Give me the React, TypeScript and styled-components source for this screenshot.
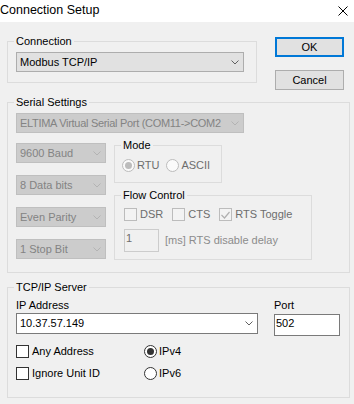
import React from 'react';
import styled, { createGlobalStyle } from 'styled-components';

const GlobalStyle = createGlobalStyle`
  html, body {
    margin: 0;
    padding: 0;
    background: #f0f0f0;
  }
  * {
    box-sizing: border-box;
  }
`;

const win_font = '"Liberation Sans", Arial, sans-serif';

const Window = styled.div`
  width: 354px;
  height: 404px;
  overflow: hidden;
  background: #f0f0f0;
  color: #000;
  font-family: ${win_font};
  font-size: 11px;
  line-height: 13px;
`;

const TitleBar = styled.div`
  height: 22px;
  background: #fff;
  display: flex;
  align-items: flex-start;
  justify-content: space-between;
  padding: 2px 6px 0 0;
`;

const Title = styled.span`
  font-size: 12.5px;
  line-height: 16px;
`;

const CloseIcon = styled.svg`
  margin-top: 4px;
`;

const Body = styled.div`
  display: flex;
  flex-direction: column;
  padding: 13px 4px 0 7px;
`;

const TopRow = styled.div`
  display: flex;
  align-items: flex-start;
`;

const Group = styled.fieldset<{ $w?: number; $pad: string; $mt?: number }>`
  margin: ${p => p.$mt ?? 0}px 0 0 0;
  min-width: 0;
  width: ${p => (p.$w ? `${p.$w}px` : 'auto')};
  border: 1px solid #dcdcdc;
  padding: ${p => p.$pad};
`;

const Legend = styled.legend<{ $x?: number }>`
  padding: 0 2px;
  margin-left: ${p => p.$x ?? -2}px;
  font-size: 11px;
  line-height: 13px;
`;

const ButtonColumn = styled.div`
  display: flex;
  flex-direction: column;
  gap: 13px;
  margin-left: 18px;
  padding-top: 2px;
`;

const DialogButton = styled.button<{ $default?: boolean }>`
  width: 69px;
  height: 20px;
  padding: 0;
  font-family: ${win_font};
  font-size: 11px;
  line-height: 13px;
  color: #000;
  background: #e1e1e1;
  border: ${p => (p.$default ? '2px solid #0078d7' : '1px solid #adadad')};
`;

type ComboKind = 'normal' | 'disabled' | 'white';

const comboBg = { normal: '#e1e1e1', disabled: '#cccccc', white: '#ffffff' };
const comboBorder = { normal: '#adadad', disabled: '#bfbfbf', white: '#7a7a7a' };
const comboText = { normal: '#000000', disabled: '#838383', white: '#000000' };
const chevronColor = { normal: '#606060', disabled: '#b3b3b3', white: '#606060' };

const ComboBox = styled.div<{ $w: number; $h?: number; $kind: ComboKind }>`
  display: flex;
  align-items: center;
  width: ${p => p.$w}px;
  height: ${p => p.$h ?? 20}px;
  padding: 0 4px 0 3px;
  border: 1px solid ${p => comboBorder[p.$kind]};
  background: ${p => comboBg[p.$kind]};
  color: ${p => comboText[p.$kind]};
`;

const ComboText = styled.span<{ $squeeze?: boolean }>`
  flex: 1;
  overflow: hidden;
  white-space: nowrap;
  margin-right: 6px;
  letter-spacing: ${p => (p.$squeeze ? '-0.3px' : 'normal')};
`;

const SerialRow = styled.div`
  display: flex;
  align-items: flex-start;
  gap: 8px;
  margin-top: 6px;
`;

const ComboColumn = styled.div`
  display: flex;
  flex-direction: column;
  gap: 12px;
  padding-top: 4px;
`;

const SideColumn = styled.div`
  display: flex;
  flex-direction: column;
  gap: 6px;
`;

const OptionRow = styled.div<{ $gap: number }>`
  display: flex;
  align-items: center;
  gap: ${p => p.$gap}px;
  height: 13px;
`;

const Option = styled.label<{ $gap?: number; $dim?: boolean }>`
  display: flex;
  align-items: center;
  gap: ${p => p.$gap ?? 3}px;
  height: 13px;
  color: ${p => (p.$dim ? '#6d6d6d' : '#000')};
  white-space: nowrap;
`;

const CheckBox = styled.span<{ $dim?: boolean }>`
  display: inline-flex;
  align-items: center;
  justify-content: center;
  width: 13px;
  height: 13px;
  border: 1px solid ${p => (p.$dim ? '#bcbcbc' : '#333333')};
  background: ${p => (p.$dim ? '#f3f3f3' : '#ffffff')};
`;

const RadioCircle = styled.span<{ $dim?: boolean }>`
  display: inline-flex;
  align-items: center;
  justify-content: center;
  width: 13px;
  height: 13px;
  border-radius: 50%;
  border: 1px solid ${p => (p.$dim ? '#bcbcbc' : '#333333')};
  background: ${p => (p.$dim ? '#fafafa' : '#ffffff')};
`;

const RadioDot = styled.span<{ $dim?: boolean }>`
  width: 7px;
  height: 7px;
  border-radius: 50%;
  background: ${p => (p.$dim ? '#bcbcbc' : '#333333')};
`;

const DelayRow = styled.div`
  display: flex;
  align-items: center;
  margin-top: 8px;
`;

const EditBox = styled.div<{ $w: number; $h: number; $dim?: boolean; $mt?: number }>`
  width: ${p => p.$w}px;
  height: ${p => p.$h}px;
  margin-top: ${p => p.$mt ?? 0}px;
  padding: 2px 2px 0 1px;
  border: 1px solid ${p => (p.$dim ? '#cccccc' : '#7a7a7a')};
  background: ${p => (p.$dim ? '#f0f0f0' : '#ffffff')};
  color: ${p => (p.$dim ? '#6d6d6d' : '#000')};
`;

const DimText = styled.span`
  margin-left: 6px;
  color: #8c8c8c;
  white-space: nowrap;
`;

const AddressRow = styled.div`
  display: flex;
  align-items: flex-start;
  height: 35px;
`;

const Field = styled.div<{ $ml?: number }>`
  display: flex;
  flex-direction: column;
  margin-left: ${p => p.$ml ?? 0}px;
`;

const FieldLabel = styled.div`
  margin-bottom: 1px;
`;

const OptionGrid = styled.div`
  display: grid;
  grid-template-columns: 128px auto;
  grid-auto-rows: 13px;
  row-gap: 9px;
  margin-top: 11px;
`;

const Chevron: React.FC<{ color: string }> = ({ color }) => (
  <svg width="8" height="5" viewBox="0 0 8 5">
    <polyline points="0.5,0.5 4,4 7.5,0.5" fill="none" stroke={color} strokeWidth="1" />
  </svg>
);

const Combo: React.FC<{ w: number; h?: number; kind: ComboKind; text: string; squeeze?: boolean }> = ({ w, h, kind, text, squeeze }) => (
  <ComboBox $w={w} $h={h} $kind={kind}>
    <ComboText $squeeze={squeeze}>{text}</ComboText>
    <Chevron color={chevronColor[kind]} />
  </ComboBox>
);

const Check: React.FC<{ label: string; dim?: boolean; checked?: boolean }> = ({ label, dim, checked }) => (
  <Option $dim={dim}>
    <CheckBox $dim={dim}>
      {checked && (
        <svg width="9" height="8" viewBox="0 0 9 8">
          <polyline points="0.5,4 3.5,7 8.5,1" fill="none" stroke={dim ? '#b0b0b0' : '#333'} strokeWidth="1.2" />
        </svg>
      )}
    </CheckBox>
    {label}
  </Option>
);

const Radio: React.FC<{ label: string; dim?: boolean; selected?: boolean; gap?: number }> = ({ label, dim, selected, gap }) => (
  <Option $dim={dim} $gap={gap}>
    <RadioCircle $dim={dim}>{selected && <RadioDot $dim={dim} />}</RadioCircle>
    {label}
  </Option>
);

const serialCombos = ['9600 Baud', '8 Data bits', 'Even Parity', '1 Stop Bit'];

export default function App() {
  return (
    <Window>
      <GlobalStyle />
      <TitleBar>
        <Title>Connection Setup</Title>
        <CloseIcon width="10" height="10" viewBox="0 0 10 10">
          <line x1="0.5" y1="0.5" x2="9.5" y2="9.5" stroke="#000" strokeWidth="1" />
          <line x1="9.5" y1="0.5" x2="0.5" y2="9.5" stroke="#000" strokeWidth="1" />
        </CloseIcon>
      </TitleBar>
      <Body>
        <TopRow>
          <Group $w={250} $pad="4px 11px 10px 8px">
            <Legend>Connection</Legend>
            <Combo w={228} kind="normal" text="Modbus TCP/IP" />
          </Group>
          <ButtonColumn>
            <DialogButton $default>OK</DialogButton>
            <DialogButton>Cancel</DialogButton>
          </ButtonColumn>
        </TopRow>

        <Group $mt={6} $pad="4px 8px 12px 8px">
          <Legend>Serial Settings</Legend>
          <Combo w={228} kind="disabled" text="ELTIMA Virtual Serial Port (COM11->COM2" squeeze />
          <SerialRow>
            <ComboColumn>
              {serialCombos.map(c => (
                <Combo key={c} w={90} kind="disabled" text={c} />
              ))}
            </ComboColumn>
            <SideColumn>
              <Group $w={108} $pad="7px 8px 10px 7px">
                <Legend $x={-1}>Mode</Legend>
                <OptionRow $gap={7}>
                  <Radio label="RTU" dim selected gap={2} />
                  <Radio label="ASCII" dim gap={2} />
                </OptionRow>
              </Group>
              <Group $w={198} $pad="6px 8px 7px 9px">
                <Legend $x={-3}>Flow Control</Legend>
                <OptionRow $gap={9}>
                  <Check label="DSR" dim />
                  <Check label="CTS" dim />
                  <Check label="RTS Toggle" dim checked />
                </OptionRow>
                <DelayRow>
                  <EditBox $w={35} $h={23} $dim>1</EditBox>
                  <DimText>[ms] RTS disable delay</DimText>
                </DelayRow>
              </Group>
            </SideColumn>
          </SerialRow>
        </Group>

        <Group $mt={8} $pad="5px 8px 17px 8px">
          <Legend>TCP/IP Server</Legend>
          <AddressRow>
            <Field>
              <FieldLabel>IP Address</FieldLabel>
              <Combo w={242} h={21} kind="white" text="10.37.57.149" />
            </Field>
            <Field $ml={16}>
              <FieldLabel>Port</FieldLabel>
              <EditBox $w={66} $h={22} $mt={1}>502</EditBox>
            </Field>
          </AddressRow>
          <OptionGrid>
            <Check label="Any Address" />
            <Radio label="IPv4" selected gap={2} />
            <Check label="Ignore Unit ID" />
            <Radio label="IPv6" gap={2} />
          </OptionGrid>
        </Group>
      </Body>
    </Window>
  );
}
